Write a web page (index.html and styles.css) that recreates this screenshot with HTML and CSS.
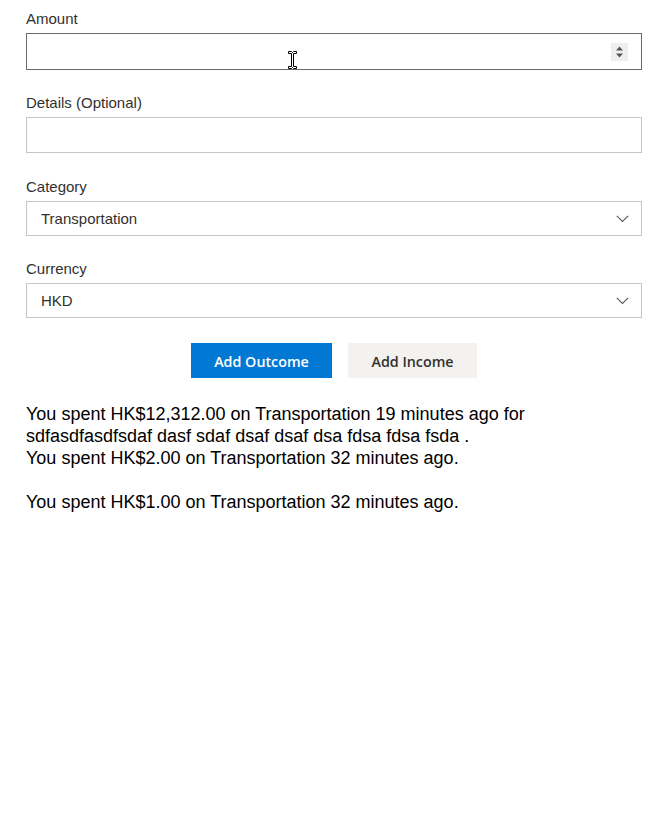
FILE: index.html
```html
<!DOCTYPE html>
<html lang="en">
<head>
<meta charset="utf-8">
<title>Expenses</title>
<link rel="stylesheet" href="styles.css">
</head>
<body>
<main class="page">
  <form class="form">
    <div class="field field-tight">
      <label class="label" for="amount">Amount</label>
      <div class="control control-active">
        <input id="amount" class="input" type="text">
        <span class="spinner" aria-hidden="true">
          <svg width="17" height="18" viewBox="0 0 17 18"><path d="M5 7.5 L8.5 3.5 L12 7.5 Z M5 10.5 L12 10.5 L8.5 14.5 Z" fill="#555"/></svg>
        </span>
        <svg class="cursor" width="9" height="18" viewBox="0 0 9 18" aria-hidden="true"><path d="M0.5 0.5 H3.5 L4.5 1.5 L5.5 0.5 H8.5 V2.5 H5.5 V15.5 H8.5 V17.5 H5.5 L4.5 16.5 L3.5 17.5 H0.5 V15.5 H3.5 V2.5 H0.5 Z" fill="#fff" stroke="#000" stroke-width="1"/></svg>
      </div>
    </div>
    <div class="field">
      <label class="label" for="details">Details (Optional)</label>
      <div class="control">
        <input id="details" class="input" type="text">
      </div>
    </div>
    <div class="field field-tight">
      <label class="label">Category</label>
      <div class="control select">
        <span class="select-value">Transportation</span>
        <svg class="chevron" width="13" height="8" viewBox="0 0 13 8" aria-hidden="true"><path d="M0.8 0.8 L6.5 6.5 L12.2 0.8" fill="none" stroke="#605e5c" stroke-width="1.2"/></svg>
      </div>
    </div>
    <div class="field field-last">
      <label class="label">Currency</label>
      <div class="control select">
        <span class="select-value">HKD</span>
        <svg class="chevron" width="13" height="8" viewBox="0 0 13 8" aria-hidden="true"><path d="M0.8 0.8 L6.5 6.5 L12.2 0.8" fill="none" stroke="#605e5c" stroke-width="1.2"/></svg>
      </div>
    </div>
    <div class="actions">
      <button type="button" class="btn btn-primary">Add Outcome</button>
      <button type="button" class="btn btn-default">Add Income</button>
    </div>
  </form>
  <section class="entries">
    <div class="entry">You spent HK$12,312.00 on Transportation 19 minutes ago for sdfasdfasdfsdaf dasf sdaf dsaf dsaf dsa fdsa fdsa fsda .</div>
    <div class="entry entry-gap">You spent HK$2.00 on Transportation 32 minutes ago.</div>
    <div class="entry">You spent HK$1.00 on Transportation 32 minutes ago.</div>
  </section>
</main>
</body>
</html>
```

FILE: styles.css
```css
* {
  box-sizing: border-box;
}

body {
  margin: 0;
  background: #ffffff;
  font-family: "Liberation Sans", Arial, sans-serif;
  color: #000;
}

.page {
  padding: 9px 24px 0 26px;
}

.form {
  display: flex;
  flex-direction: column;
}

.field {
  display: flex;
  flex-direction: column;
  margin-bottom: 24px;
}

.field-tight {
  margin-bottom: 23px;
}

.field-last {
  margin-bottom: 25px;
}

.label {
  font-size: 15px;
  line-height: 20px;
  color: #323130;
  margin-bottom: 4px;
}

.control {
  position: relative;
  display: flex;
  align-items: center;
  height: 36px;
  border: 1px solid #c8c6c4;
  background: #fff;
}

.control-active {
  height: 37px;
  border-color: #6b6b6b;
}

.input {
  flex: 1;
  min-width: 0;
  height: 100%;
  border: 0;
  outline: none;
  background: transparent;
  padding: 0 14px;
  font: 15px "Liberation Sans", Arial, sans-serif;
  color: #323130;
}

.spinner {
  display: flex;
  width: 17px;
  height: 18px;
  margin-right: 13px;
  background: #efefef;
}

.cursor {
  position: absolute;
  left: 261px;
  top: 17px;
}

.select {
  height: 35px;
  padding: 0 12px 0 14px;
  justify-content: space-between;
}

.select-value {
  font-size: 15px;
  color: #323130;
}

.chevron {
  margin-top: 1px;
}

.actions {
  display: flex;
  justify-content: center;
  gap: 16px;
  margin-bottom: 25px;
}

.btn {
  height: 35px;
  padding: 2px 0 0;
  border: 0;
  border-radius: 0;
  font-family: "Open Sans", "Noto Sans", sans-serif;
  font-weight: 600;
  font-size: 14.3px;
  cursor: pointer;
}

.btn-primary {
  width: 141px;
  background: #0078d4;
  color: #ffffff;
}

.btn-default {
  width: 129px;
  background: #f3f2f1;
  color: #323130;
}

.entries {
  font-size: 18px;
  line-height: 22px;
  color: #000;
}

.entry-gap {
  padding-bottom: 22px;
}
```
